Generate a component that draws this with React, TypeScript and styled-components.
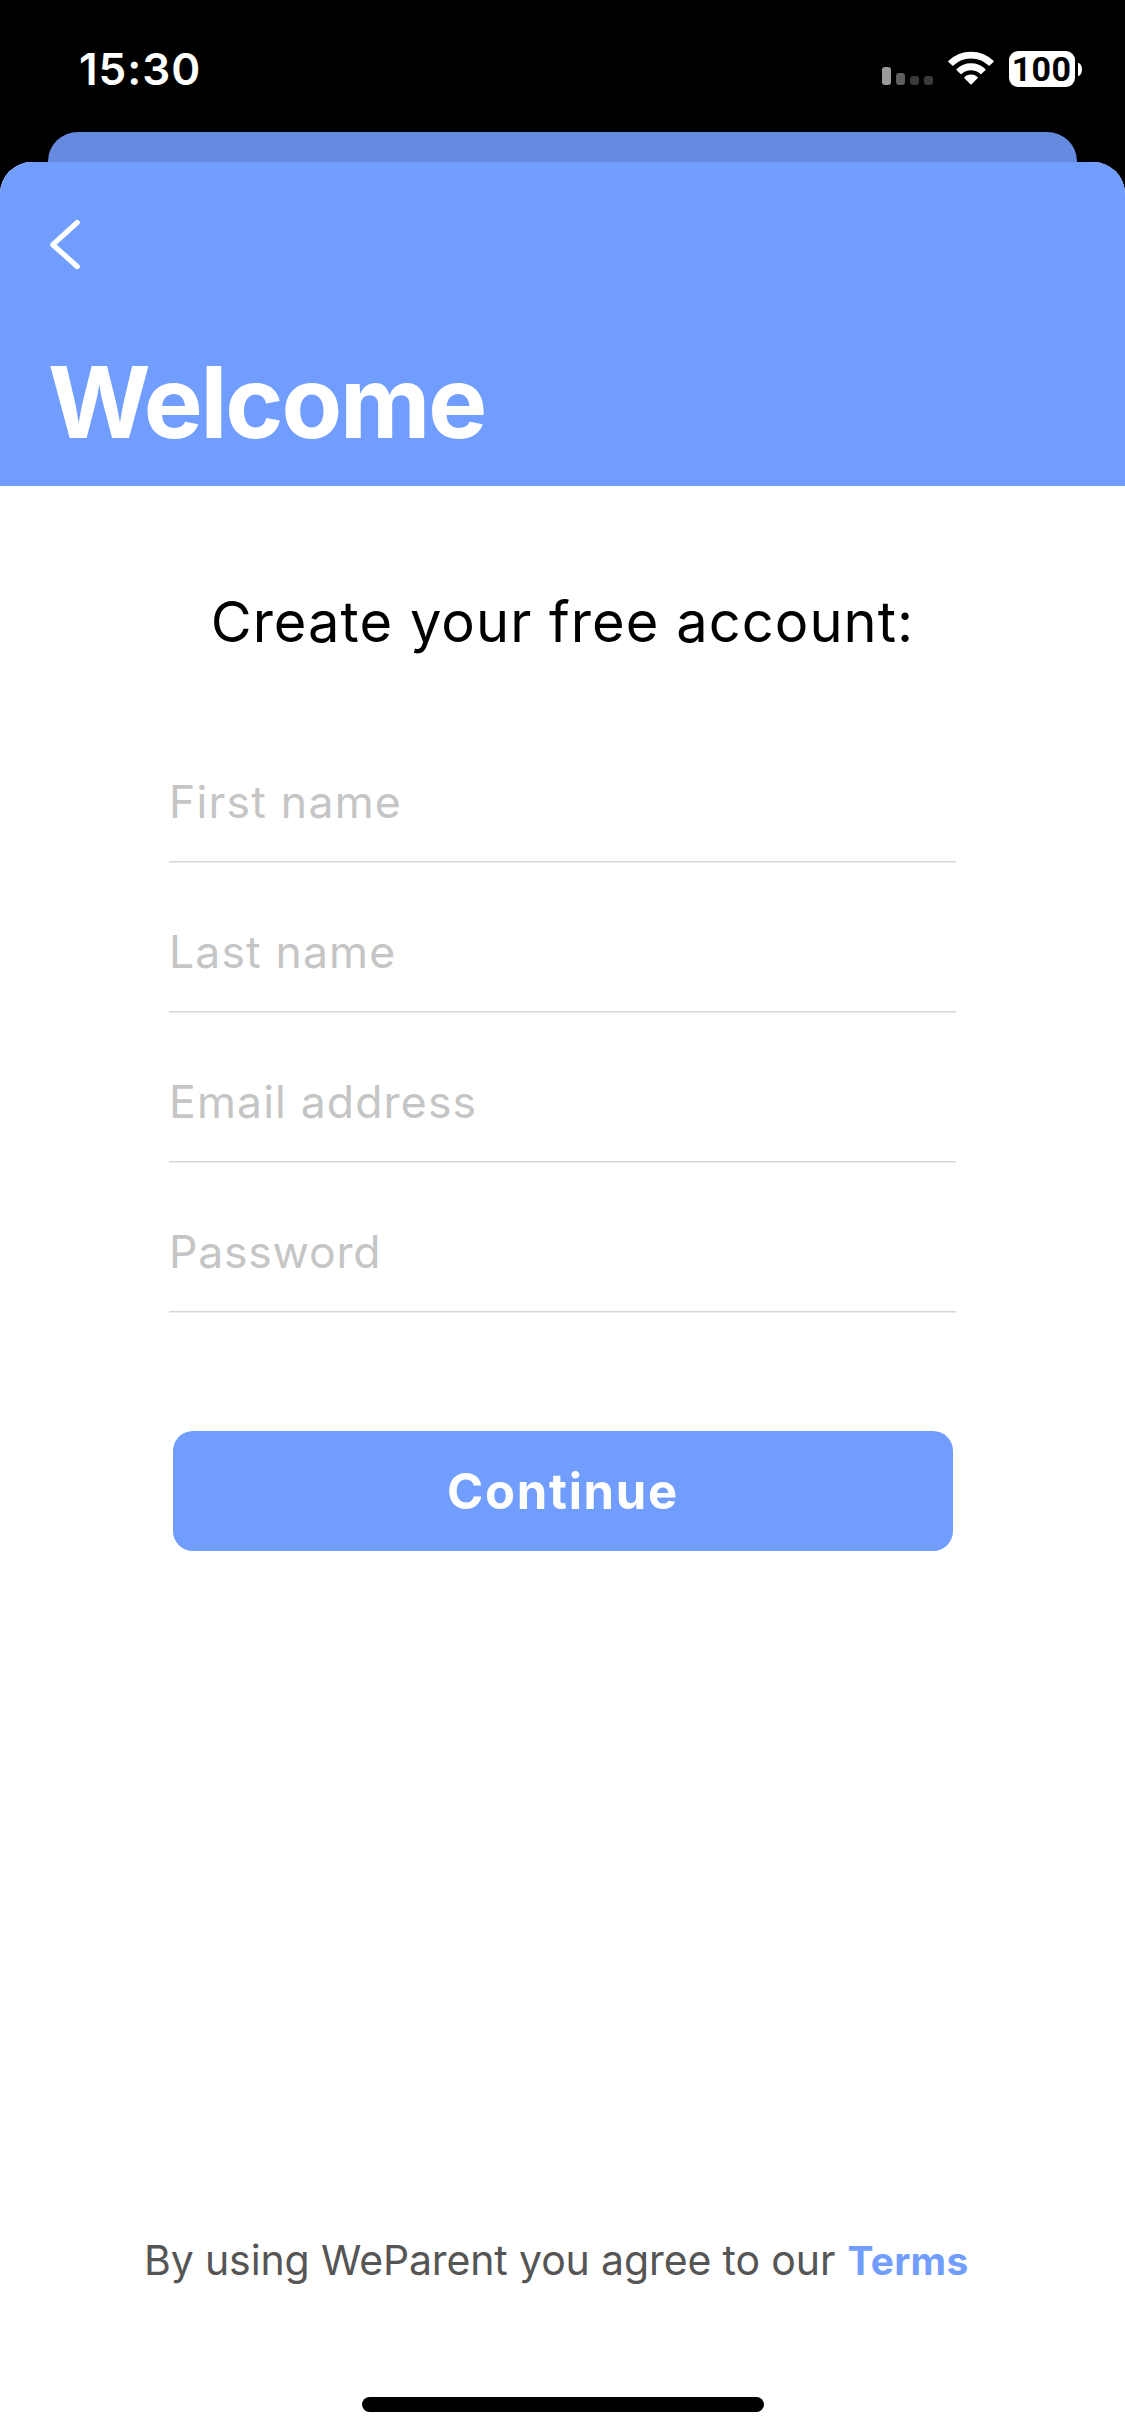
import React from "react";
import styled, { createGlobalStyle } from "styled-components";

const colors = {
  brand: "#719dff",
  brandDim: "#658ae0",
  page: "#ffffff",
  placeholder: "#c5c5c5",
  rule: "#d6d6d6",
  ruleSoft: "#ececec",
  muted: "#555555",
};

const GlobalStyle = createGlobalStyle`
  *, *::before, *::after { box-sizing: border-box; }
  html, body { margin: 0; padding: 0; background: #000; }
  body, input, button {
    font-family: Inter, "Liberation Sans", sans-serif;
    font-optical-sizing: none;
  }
`;

const Screen = styled.div`
  width: 1125px;
  height: 2436px;
  display: flex;
  flex-direction: column;
  background: #000;
  overflow: hidden;
`;

const StatusBar = styled.header`
  flex: none;
  height: 132px;
  padding: 0 43px 0 79px;
  display: flex;
  justify-content: space-between;
  align-items: flex-start;
`;

const Clock = styled.time`
  margin-top: 39px;
  font-size: 44px;
  line-height: 60px;
  font-weight: 600;
  letter-spacing: 1px;
  color: #fff;
`;

const StatusIcons = styled.div`
  display: flex;
  align-items: flex-end;
  height: 87px;
`;

const Signal = styled.div`
  display: flex;
  align-items: flex-end;
  gap: 5px;
  margin: 0 15px 2px 0;
`;

const SignalBar = styled.span<{ $height: number; $color: string }>`
  width: 9px;
  height: ${(p) => p.$height}px;
  border-radius: 3px;
  background: ${(p) => p.$color};
`;

const WifiIcon = styled.svg`
  width: 46px;
  height: 34px;
  margin: 0 15px 2px 0;
`;

const Battery = styled.div`
  display: flex;
  align-items: center;
  gap: 3px;
`;

const BatteryBody = styled.div`
  width: 66px;
  height: 36px;
  border-radius: 9px;
  background: #fff;
  color: #000;
  font-family: Roboto, "Liberation Sans", sans-serif;
  font-size: 34px;
  font-weight: 700;
  line-height: 36px;
  letter-spacing: 0.3px;
  text-indent: -1px;
  text-align: center;
`;

const BatteryTip = styled.span`
  width: 4px;
  height: 13px;
  border-radius: 0 4px 4px 0 / 0 7px 7px 0;
  background: #fff;
`;

const BackSheet = styled.div`
  flex: none;
  height: 30px;
  margin: 0 48px;
  border-radius: 30px 30px 0 0 / 29px 29px 0 0;
  background: ${colors.brandDim};
`;

const Sheet = styled.main`
  flex: 1;
  display: flex;
  flex-direction: column;
  border-radius: 32px 32px 0 0;
  background: ${colors.page};
  overflow: hidden;
`;

const Banner = styled.div`
  flex: none;
  height: 324px;
  padding: 55px 48px 0;
  background: ${colors.brand};
`;

const BackButton = styled.button`
  display: block;
  width: 36px;
  height: 55px;
  padding: 0;
  border: 0;
  background: none;

  svg {
    display: block;
  }
`;

const Title = styled.h1`
  margin: 70px 0 0;
  font-size: 99px;
  line-height: 120px;
  font-weight: 700;
  letter-spacing: -2.1px;
  color: #fff;
`;

const Form = styled.form`
  flex: 1;
  display: flex;
  flex-direction: column;
  align-items: center;
`;

const Prompt = styled.h2`
  margin: 96px 0 52px;
  font-size: 56px;
  line-height: 80px;
  font-weight: 430;
  letter-spacing: 1.05px;
  white-space: nowrap;
  color: #000;
`;

const Field = styled.label`
  display: flex;
  width: 787px;
  height: 150px;
  padding-top: 29px;
`;

const Input = styled.input<{ $tracking: number }>`
  width: 100%;
  height: 119px;
  padding: 0 0 1px 0;
  border: 0;
  border-bottom: 1px solid ${colors.rule};
  border-radius: 0;
  box-shadow: 0 1px 0 ${colors.ruleSoft};
  outline: 0;
  background: none;
  font-size: 44.5px;
  font-weight: 430;
  letter-spacing: ${(p) => p.$tracking}px;
  color: #000;

  &::placeholder {
    color: ${colors.placeholder};
    opacity: 1;
  }
`;

const Submit = styled.button`
  width: 780px;
  height: 120px;
  margin: 117px 0 0 1px;
  padding: 1px 0 0;
  border: 0;
  border-radius: 20px;
  background: ${colors.brand};
  color: #fff;
  font-size: 49px;
  font-weight: 700;
  letter-spacing: 1.7px;
`;

const Legal = styled.p`
  flex: none;
  margin: 0;
  padding-left: 144px;
  font-size: 41px;
  line-height: 60px;
  letter-spacing: -0.13px;
  white-space: nowrap;
  color: ${colors.muted};
`;

const TermsLink = styled.a`
  margin-left: 1px;
  font-size: 39px;
  font-weight: 700;
  letter-spacing: 0.2px;
  color: ${colors.brand};
`;

const HomeIndicator = styled.div`
  flex: none;
  align-self: center;
  width: 402px;
  height: 15px;
  margin: 106px 0 24px 1px;
  border-radius: 8px;
  background: #000;
`;

const signalBars = [
  { height: 18, color: "#9a9a9a" },
  { height: 12, color: "#5e5e5e" },
  { height: 9, color: "#3a3a3a" },
  { height: 9, color: "#3a3a3a" },
];

const fields = [
  { name: "firstName", label: "First name", type: "text", tracking: 1.25 },
  { name: "lastName", label: "Last name", type: "text", tracking: 1.15 },
  { name: "email", label: "Email address", type: "email", tracking: 1.15 },
  { name: "password", label: "Password", type: "password", tracking: 0.8 },
];

export default function App() {
  return (
    <>
      <GlobalStyle />
      <Screen>
        <StatusBar>
          <Clock>15:30</Clock>
          <StatusIcons>
            <Signal>
              {signalBars.map((bar, i) => (
                <SignalBar key={i} $height={bar.height} $color={bar.color} />
              ))}
            </Signal>
            <WifiIcon viewBox="0 0 46 34" fill="#fff" stroke="#fff" strokeWidth="1.6" strokeLinejoin="round">
              <path d="M1.1 10.4 A31.5 31.5 0 0 1 44.9 10.4 L41.2 14 A26.4 26.4 0 0 0 4.8 14 Z" />
              <path d="M9.2 18.6 A20 20 0 0 1 36.8 18.6 L33 22.3 A14.7 14.7 0 0 0 13 22.3 Z" />
              <path d="M17 26.6 A9.2 9.2 0 0 1 29 26.6 L23 32.6 Z" />
            </WifiIcon>
            <Battery>
              <BatteryBody>100</BatteryBody>
              <BatteryTip />
            </Battery>
          </StatusIcons>
        </StatusBar>
        <BackSheet />
        <Sheet>
          <Banner>
            <BackButton aria-label="Back">
              <svg width="36" height="55" viewBox="0 0 36 55" fill="none" stroke="#fff" strokeWidth="5.2" strokeLinecap="round" strokeLinejoin="round">
                <path d="M29.2 5.5 L4.8 27.7 L29.2 49.5" />
              </svg>
            </BackButton>
            <Title>Welcome</Title>
          </Banner>
          <Form onSubmit={(e) => e.preventDefault()}>
            <Prompt>Create your free account:</Prompt>
            {fields.map((f) => (
              <Field key={f.name}>
                <Input name={f.name} type={f.type} placeholder={f.label} $tracking={f.tracking} />
              </Field>
            ))}
            <Submit type="submit">Continue</Submit>
          </Form>
          <Legal>
            By using WeParent you agree to our <TermsLink>Terms</TermsLink>
          </Legal>
          <HomeIndicator />
        </Sheet>
      </Screen>
    </>
  );
}
